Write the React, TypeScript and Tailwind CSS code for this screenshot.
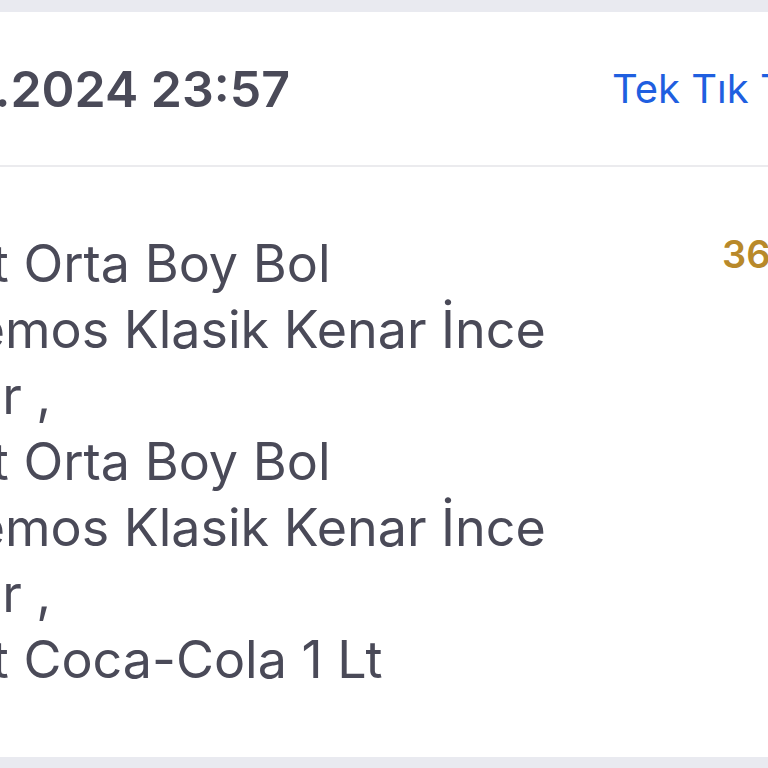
const ITEM_LINES = [
  "1 Adet Orta Boy Bol",
  "Malzemos Klasik Kenar İnce",
  "Hamur ,",
  "1 Adet Orta Boy Bol",
  "Malzemos Klasik Kenar İnce",
  "Hamur ,",
  "1 Adet Coca-Cola 1 Lt",
];

export default function App() {
  return (
    <div
      className="min-h-screen bg-[#e9eaf0] pt-3 pb-[11px] overflow-hidden"
      style={{ fontFamily: "Inter, 'Noto Sans', sans-serif" }}
    >
      <div className="bg-white overflow-hidden">
        {/* Order header */}
        <div className="flex items-center h-[155px] border-b-2 border-[#ebebee]">
          <div className="w-[290px] shrink-0 flex justify-end whitespace-nowrap">
            <span className="text-[50px] font-semibold text-[#4a4a58] leading-none">
              14.11.2024 23:57
            </span>
          </div>
          <div className="ml-[322px] shrink-0 whitespace-nowrap">
            <span className="text-[40px] text-[#1f5fe0] leading-none">
              Tek Tık Tekrarla
            </span>
          </div>
        </div>

        {/* Order items */}
        <div className="flex pt-[64px] pb-[64px]">
          <div className="w-[722px] shrink-0">
            <div className="ml-[-142px] text-[52px] leading-[66px] text-[#4a4a58] whitespace-nowrap">
              {ITEM_LINES.map((line, i) => (
                <div key={i}>{line}</div>
              ))}
            </div>
          </div>
          <div className="shrink-0 whitespace-nowrap">
            <span className="text-[38px] font-semibold text-[#b8892a] leading-[46px]">
              36,90 TL
            </span>
          </div>
        </div>
      </div>
    </div>
  );
}
